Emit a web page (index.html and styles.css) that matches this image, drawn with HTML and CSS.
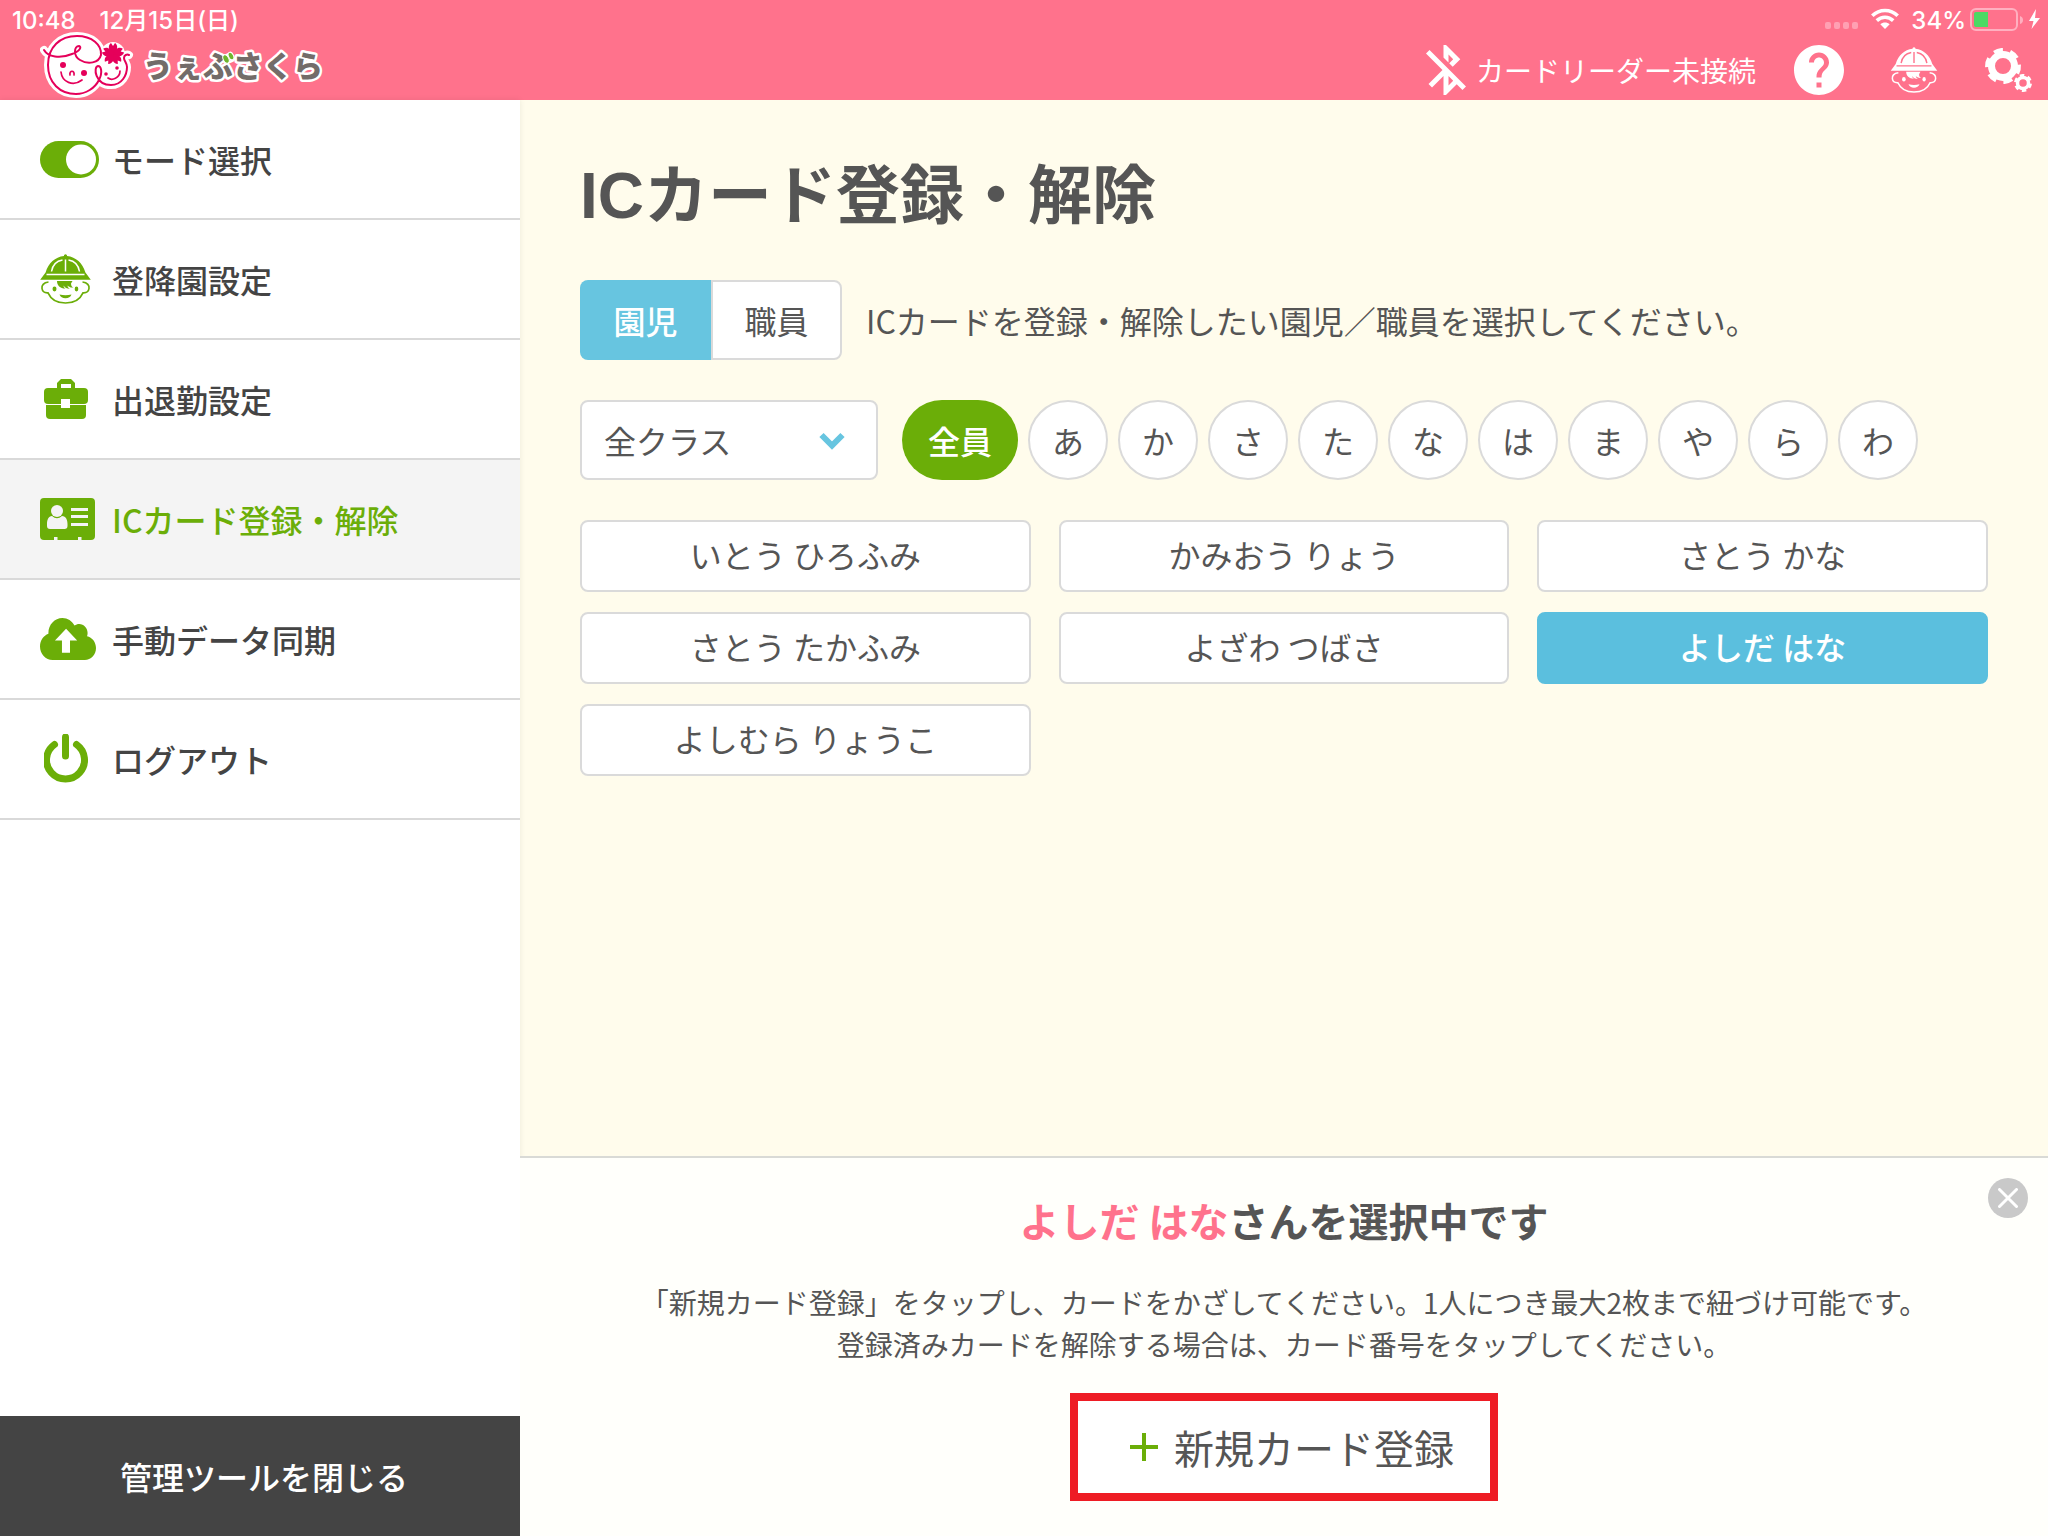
FILE: index.html
```html
<!DOCTYPE html>
<html lang="ja">
<head>
<meta charset="utf-8">
<meta name="viewport" content="width=device-width, initial-scale=1">
<title>ICカード登録・解除 | うぇぶさくら</title>
<link rel="stylesheet" href="styles.css">
</head>
<body>
<svg class="sprite" aria-hidden="true">
  <symbol id="child" viewBox="0 0 51 50">
    <path fill="currentColor" d="M.2 25.8 5.6 18.500C8.500 9 15 3 24 2V1.200Q25.500-.6 27 1.200V2C36 3 42.500 9 45.400 18.500L50.800 25.800z"/>
    <g class="cut" fill="none" stroke-width="1.500"><path d="M6.500 20.500H44.500M25.500 5.500V17.500M11.500 17.500C12.500 11.500 16.500 7 22.500 6M39.500 17.500C38.500 11.500 34.500 7 28.500 6"/></g>
    <g fill="none" stroke="currentColor" stroke-width="1.700"><path d="M8.500 28C3.500 28.500 1.500 31.500 2 34.500 2.500 38 5 39 8 38.800 11 45.500 17 49 25.500 49S40 45.500 43 38.800C46 39 48.500 38 49 34.500 49.500 31.500 47.500 28.500 42.500 28"/></g>
    <path fill="currentColor" d="M17 27H32.500L31 29.500C31 32 32 33 33.500 33.500 30.500 34 28.500 32.500 27.500 31.500 27.500 33 28.500 34 30 34.800 27 34.800 24.500 33.500 23.500 31.500 23.500 33 24.500 34 25.500 34.600 20 34.500 17 31.500 17 27z"/>
    <ellipse cx="14.500" cy="35" rx="2" ry="2.400" fill="currentColor"/><ellipse cx="36.500" cy="35" rx="1.800" ry="2.400" fill="currentColor"/>
    <path fill="currentColor" d="M19.500 40.500Q25.500 42 31.500 40.500C30.500 43 28.500 44.300 25.500 44.300S20.500 43 19.500 40.500z"/>
  </symbol>
</svg>

<header class="header">
  <div class="status">
    <span class="status-left"><span>10:48</span><span>12月15日(日)</span></span>
    <span class="status-right">
      <svg class="signal" width="34" height="22" viewBox="0 0 34 22" fill="#ffa0b3"><rect y="14" width="6" height="7" rx="2"/><rect x="9" y="14" width="6" height="7" rx="2"/><rect x="18" y="14" width="6" height="7" rx="2"/><rect x="27" y="14" width="6" height="7" rx="2"/></svg>
      <svg width="28" height="22" viewBox="0 0 28 22" fill="none" stroke="#fff" stroke-width="3.600"><path d="M1.300 7.800C8.500.8 19.500.8 26.700 7.800M5.800 12.600C10.500 8.200 17.500 8.200 22.200 12.600"/><path fill="#fff" stroke="none" d="M14 21 9.300 16.200C12 13.900 16 13.900 18.700 16.200z"/></svg>
      <span class="battery-text">34%</span>
      <svg width="72" height="24" viewBox="0 0 72 24"><rect x="1" y="1" width="46" height="21" rx="5" fill="none" stroke="#ffb0c0" stroke-width="2"/><path d="M50 8Q53 9 53 12T50 16z" fill="#ffb0c0"/><path d="M4 6Q4 4 6 4H18V19H6Q4 19 4 17z" fill="#4cd964"/><path d="M66 1 59 13H63.500L61.500 21 70 10H65z" fill="#fff"/></svg>
    </span>
  </div>
  <div class="bar">
    <a class="logo" href="#" aria-label="うぇぶさくら">
      <svg width="290" height="67" viewBox="40 31 290 67">
        <defs><path id="faces" d="M44 49C48 56 60 58 72 53 80 50 82 46 79 45 74 45 73 55 80 59 88 64 99 62 101 54 102 44 92 35 77 35 60 35 48 46 48 64 48 82 60 93 76 93 86 93 95 87 99 79 103 71 101 65 98 65 93 66 95 84 111 84 122 84 127 74 127 66 127 62 124 60 124 57 124 54 127 53 129 54"/></defs>
        <use href="#faces" fill="#fff" stroke="#fff" stroke-width="8" stroke-linecap="round" stroke-linejoin="round"/>
        <circle cx="113" cy="53" r="12" fill="#fff"/>
        <use href="#faces" fill="none" stroke="#e5005a" stroke-width="2" stroke-linecap="round"/>
        <g fill="#e5005a"><circle cx="63" cy="64" r="3"/><circle cx="84" cy="72" r="3"/><circle cx="106" cy="73" r="1.800"/><circle cx="117" cy="67" r="1.800"/>
          <g><path id="petal" d="M113 55 109.500 49C108 46 109 43.500 111 42L113 45 115 42C117 43.500 118 46 116.500 49z"/><use href="#petal" transform="rotate(72 113 53)"/><use href="#petal" transform="rotate(144 113 53)"/><use href="#petal" transform="rotate(216 113 53)"/><use href="#petal" transform="rotate(288 113 53)"/></g></g>
        <g fill="none" stroke="#e5005a" stroke-width="1.700" stroke-linecap="round"><path d="M61 71C62 81 73 86 82 79M70 74C69 69 75 69 74 74M108 77C112 80 120 77 120 70"/></g>
        <text class="logo-text" x="143" y="76">うぇぶさくら</text>
        <g fill="#6fb52c" stroke="#fff" stroke-width="1"><ellipse cx="226" cy="58" rx="2.800" ry="4.500" transform="rotate(-25 226 58)"/><ellipse cx="231" cy="55" rx="2.500" ry="4" transform="rotate(-25 231 55)"/></g>
      </svg>
    </a>
    <div class="tools">
      <span class="reader">
        <svg width="40" height="50" viewBox="4 2 16 20" fill="#fff"><path d="M13 5.830l1.880 1.880-1.600 1.600 1.410 1.410 3.020-3.020L12 2h-1v5.030l2 2v-3.200zM5.410 4L4 5.410 10.590 12 5 17.590 6.410 19 11 14.410V22h1l4.290-4.290 2.300 2.290L20 18.590 5.410 4zM13 18.170v-3.760l1.880 1.880L13 18.170z"/></svg>
        カードリーダー未接続
      </span>
      <button class="tool" type="button" aria-label="ヘルプ"><svg width="50" height="50" viewBox="2 2 20 20" fill="#fff"><path d="M12 2C6.480 2 2 6.480 2 12s4.480 10 10 10 10-4.480 10-10S17.520 2 12 2zm1 17h-2v-2h2v2zm2.070-7.750l-.9.920C13.450 12.900 13 13.500 13 15h-2v-.5c0-1.100.45-2.100 1.170-2.830l1.240-1.260c.37-.36.59-.86.59-1.410 0-1.100-.9-2-2-2s-2 .9-2 2H8c0-2.210 1.790-4 4-4s4 1.790 4 4c0 .88-.36 1.680-.93 2.250z"/></svg></button>
      <button class="tool" type="button" aria-label="園児"><svg width="48" height="46"><use href="#child"/></svg></button>
      <button class="tool" type="button" aria-label="設定"><svg width="48" height="46" viewBox="0 0 48 46" fill="none" stroke="#fff"><circle cx="19" cy="19" r="11.500" stroke-width="7"/><circle cx="19" cy="19" r="15" stroke-width="6" stroke-dasharray="8.700 7" stroke-linejoin="round" transform="rotate(-5 19 19)"/><circle cx="39" cy="36" r="5.500" stroke-width="3.500"/><circle cx="39" cy="36" r="7.500" stroke-width="3" stroke-dasharray="4.300 3.550" transform="rotate(5 39 36)"/></svg></button>
    </div>
  </div>
</header>

<div class="layout">
  <aside class="sidebar">
    <nav class="menu">
      <a class="menu-item" href="#"><span class="menu-icon"><svg width="59" height="37" viewBox="0 0 59 37"><rect width="59" height="37" rx="18.500" fill="currentColor"/><circle cx="41" cy="18.500" r="15" fill="#fff"/></svg></span>モード選択</a>
      <a class="menu-item" href="#"><span class="menu-icon"><svg width="51" height="50"><use href="#child"/></svg></span>登降園設定</a>
      <a class="menu-item" href="#"><span class="menu-icon menu-icon-inset"><svg width="44" height="40" viewBox="0 0 44 40" fill="currentColor"><path fill-rule="evenodd" d="M13 10V4L17 0H27L31 4V10zM17 9H27V5H17z"/><rect y="9" width="44" height="16" rx="4"/><path d="M2 26H42V36Q42 40 38 40H6Q2 40 2 36z"/><path fill="#fff" d="M17 20H26V29H17z"/></svg></span>出退勤設定</a>
      <a class="menu-item active" href="#" aria-current="page"><span class="menu-icon"><svg width="55" height="42" viewBox="0 0 55 42"><path fill="currentColor" d="M4 0H51Q55 0 55 4V38Q55 42 51 42H41.500V39H38V42H17.500V39H14V42H4Q0 42 0 38V4Q0 0 4 0z"/><g fill="#f4f4f4"><circle cx="17" cy="13" r="6"/><path d="M12 18Q17 22.500 22 18C26 18 27.500 22 27.500 26V28Q27.500 31 24.500 31H10Q7 31 7 28V26C7 22 8.500 18 12 18zM31 10H48V13H31zM31 17H48V20H31zM31 25H48V28H31z"/></g></svg></span>ICカード登録・解除</a>
      <a class="menu-item" href="#"><span class="menu-icon"><svg width="56" height="42" viewBox="0 32 640 448" preserveAspectRatio="none"><path fill="currentColor" d="M537.600 226.600c4.100-10.700 6.400-22.400 6.400-34.600 0-53-43-96-96-96-19.700 0-38.100 6-53.300 16.200C367 64.200 315.300 32 256 32c-88.400 0-160 71.600-160 160 0 2.700.1 5.400.2 8.100C40.200 219.800 0 273.200 0 336c0 79.500 64.500 144 144 144h368c70.700 0 128-57.300 128-128 0-61.900-44-113.600-102.400-125.400z"/><path fill="#fff" d="M425 272H343V402H251V272H171L298 146z"/></svg></span>手動データ同期</a>
      <a class="menu-item" href="#"><span class="menu-icon menu-icon-inset"><svg width="45" height="50" viewBox="1 1 45 50" fill="none" stroke="currentColor" stroke-width="7" stroke-linecap="round"><path d="M22.500 4V23M11.500 11.500A19 19 0 1 0 33.500 11.500"/></svg></span>ログアウト</a>
    </nav>
    <button class="close-tool" type="button">管理ツールを閉じる</button>
  </aside>

  <main class="main">
    <section class="content">
      <h1 class="title">ICカード登録・解除</h1>
      <div class="row">
        <div class="segment"><button class="segment-btn selected" type="button">園児</button><button class="segment-btn" type="button">職員</button></div>
        <p class="hint">ICカードを登録・解除したい園児／職員を選択してください。</p>
      </div>
      <div class="row">
        <div class="select-wrap">
          <select class="select" aria-label="クラス"><option>全クラス</option></select>
          <svg class="chevron" width="26" height="18" viewBox="0 0 26 18" fill="none" stroke="#67c5e0" stroke-width="6"><path d="M2.500 3 13 13.500 23.500 3"/></svg>
        </div>
        <div class="kana">
          <button class="kana-btn all" type="button">全員</button>
          <button class="kana-btn" type="button">あ</button><button class="kana-btn" type="button">か</button><button class="kana-btn" type="button">さ</button><button class="kana-btn" type="button">た</button><button class="kana-btn" type="button">な</button><button class="kana-btn" type="button">は</button><button class="kana-btn" type="button">ま</button><button class="kana-btn" type="button">や</button><button class="kana-btn" type="button">ら</button><button class="kana-btn" type="button">わ</button>
        </div>
      </div>
      <div class="names">
        <button class="name" type="button">いとう ひろふみ</button>
        <button class="name" type="button">かみおう りょう</button>
        <button class="name" type="button">さとう かな</button>
        <button class="name" type="button">さとう たかふみ</button>
        <button class="name" type="button">よざわ つばさ</button>
        <button class="name selected" type="button">よしだ はな</button>
        <button class="name" type="button">よしむら りょうこ</button>
      </div>
    </section>

    <section class="panel">
      <button class="dismiss" type="button" aria-label="閉じる"><svg width="20" height="20" viewBox="0 0 20 20" stroke="#fff" stroke-width="3" stroke-linecap="round"><path d="M1.500 1.500 18.500 18.500M18.500 1.500 1.500 18.500"/></svg></button>
      <h2 class="panel-title"><em class="person">よしだ はな</em>さんを選択中です</h2>
      <p class="panel-text">「新規カード登録」をタップし、カードをかざしてください。1人につき最大2枚まで紐づけ可能です。<br>登録済みカードを解除する場合は、カード番号をタップしてください。</p>
      <button class="add" type="button"><svg width="28" height="28" viewBox="0 0 28 28" fill="#6bae08"><path d="M12 0H16V12H28V16H16V28H12V16H0V12H12z"/></svg>新規カード登録</button>
    </section>
  </main>
</div>
</body>
</html>
```
FILE: styles.css
```css
* { box-sizing: border-box; }

body {
  margin: 0;
  min-height: 100vh;
  display: flex;
  flex-direction: column;
  background: #fffcec;
  color: #555;
  font-family: "Noto Sans CJK JP", sans-serif;
  font-size: 32px;
  line-height: 48px;
}

h1, h2, p { margin: 0; }
a { color: inherit; text-decoration: none; }
button, select { font: inherit; color: inherit; margin: 0; cursor: pointer; }
svg { display: block; flex: none; }
.sprite { position: absolute; width: 0; height: 0; }
.cut { stroke: var(--cut, #fff); }

/* header */
.header { background: #ff728c; color: #fff; }
.status {
  display: flex;
  justify-content: space-between;
  height: 32px;
  padding: 8px 6px 0 12px;
  font-family: Inter, "Noto Sans CJK JP", sans-serif;
  font-size: 24px;
  line-height: 26px;
  font-weight: 500;
}
.status-left { display: flex; gap: 24px; }
.status-right { display: flex; }
.signal { margin-right: 12px; }
.battery-text { margin: 0 4px 0 12px; }
.bar {
  display: flex;
  justify-content: space-between;
  align-items: flex-end;
  height: 68px;
  padding: 0 16px 0 40px;
}
.logo { align-self: flex-start; }
.logo-text {
  font-size: 30px;
  font-weight: 900;
  fill: #736c69;
  stroke: #fff;
  stroke-width: 5px;
  stroke-linejoin: round;
  paint-order: stroke;
}
.tools { display: flex; align-items: center; gap: 46px; padding-bottom: 5px; }
.reader {
  display: flex;
  align-items: center;
  gap: 10px;
  margin-right: -8px;
  font-size: 28px;
}
.tool { padding: 0; border: 0; background: none; color: #fff; --cut: #ff728c; }

/* layout */
.layout { flex: 1; display: flex; }
.sidebar {
  flex: 0 0 520px;
  display: flex;
  flex-direction: column;
  justify-content: space-between;
  background: #fff;
  color: #444;
  box-shadow: 0 0 6px rgba(0, 0, 0, .08);
}
.menu-item {
  display: flex;
  align-items: center;
  height: 120px;
  padding-left: 40px;
  border-bottom: 2px solid #d9d9d9;
  font-weight: 500;
}
.menu-icon { width: 72px; color: #6bae08; }
.menu-icon-inset { padding-left: 4px; }
.menu-item.active { background: #f4f4f4; color: #6bae08; }
.close-tool {
  height: 120px;
  padding: 0 0 0 8px;
  border: 0;
  background: #444;
  color: #fff;
  font-weight: 500;
}

.main { flex: 1; min-width: 0; display: flex; flex-direction: column; }
.content { flex: 1; padding: 48px 60px 40px; }
.title {
  margin-bottom: 36px;
  font-family: "Liberation Sans", "Noto Sans CJK JP", sans-serif;
  font-size: 64px;
  line-height: 96px;
  font-weight: 700;
}
.row { display: flex; align-items: center; gap: 24px; margin-bottom: 40px; }

.segment { display: flex; }
.segment-btn {
  width: 131px;
  height: 80px;
  padding: 0;
  background: #fff;
  border: 2px solid #dadada;
  border-radius: 0 8px 8px 0;
}
.segment-btn.selected {
  background: #67c5e0;
  border: 0;
  border-radius: 8px 0 0 8px;
  color: #fff;
  font-weight: 500;
}

.select-wrap { position: relative; width: 298px; }
.select {
  display: block;
  appearance: none;
  width: 100%;
  height: 80px;
  padding: 0 22px;
  border: 2px solid #dadada;
  border-radius: 8px;
  background: #fff;
}
.chevron { position: absolute; right: 33px; top: 32px; pointer-events: none; }

.kana { display: flex; gap: 10px; }
.kana-btn {
  width: 80px;
  height: 80px;
  padding: 0;
  border: 2px solid #dadada;
  border-radius: 40px;
  background: #fff;
}
.kana-btn.all {
  width: 116px;
  border: 0;
  background: #6bae08;
  color: #fff;
  font-weight: 500;
}

.names {
  display: grid;
  grid-template-columns: repeat(3, 1fr);
  gap: 20px 28px;
}
.name {
  height: 72px;
  padding: 0 0 4px;
  border: 2px solid #dadada;
  border-radius: 8px;
  background: #fff;
}
.name.selected { background: #5bbfde; border-color: #5bbfde; color: #fff; font-weight: 500; }

/* selection panel */
.panel {
  position: relative;
  display: flex;
  flex-direction: column;
  align-items: center;
  padding: 32px 60px 35px;
  border-top: 2px solid #d9dad6;
  background: #fffffb;
  text-align: center;
}
.dismiss {
  position: absolute;
  top: 20px;
  right: 20px;
  width: 40px;
  height: 40px;
  padding: 10px;
  border: 0;
  border-radius: 50%;
  background: #c9c9c9;
}
.panel-title { font-size: 40px; line-height: 60px; font-weight: 700; }
.person { color: #ff728c; font-style: normal; }
.panel-text { margin-top: 31px; font-size: 28px; line-height: 42px; }
.add {
  display: flex;
  align-items: center;
  gap: 16px;
  height: 108px;
  margin-top: 28px;
  padding: 0 36px 0 52px;
  border: 8px solid #ee1c24;
  background: #fff;
  font-size: 40px;
}
```
